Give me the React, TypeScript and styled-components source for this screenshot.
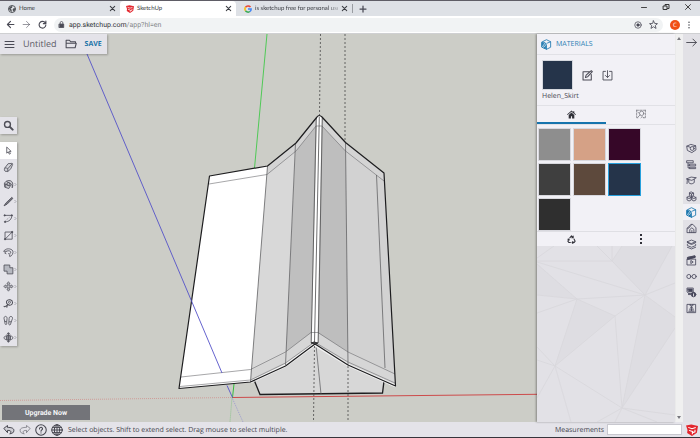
import React from 'react';
import styled, { createGlobalStyle } from 'styled-components';

const Global = createGlobalStyle`
  * { box-sizing: border-box; }
  html, body { margin: 0; }
  body {
    font-family: "Open Sans", "Noto Sans", sans-serif;
    font-size: 7px;
    line-height: 12px;
    text-rendering: geometricPrecision;
    color: #4a4a55;
    background: #e2e1e6;
  }
  button, input { font: inherit; color: inherit; text-rendering: inherit; }
`;

const Page = styled.div`
  min-height: 100vh;
  display: flex;
  flex-direction: column;
  border-top: 1px solid #5f5d66;
  border-bottom: 1px solid #36343b;
`;

const Plain = styled.button`
  display: flex;
  align-items: center;
  justify-content: center;
  flex: none;
  padding: 0;
  border: 0;
  background: transparent;
`;

/* ---------- browser frame ---------- */

const TabStrip = styled.div`
  display: flex;
  align-items: stretch;
  height: 15px;
  background: #dee1e6;
  font-family: Lato, "Open Sans", sans-serif;
  font-size: 6px;
`;

const Tab = styled.div<{ $active?: boolean; $width: number }>`
  display: flex;
  align-items: center;
  gap: 3px;
  width: ${(p) => p.$width}px;
  padding: 0 4px 0 ${(p) => (p.$active ? 6 : 8)}px;
  border-radius: 4px 4px 0 0;
  background: ${(p) => (p.$active ? '#ffffff' : 'transparent')};
  color: #3a3c42;
`;

const TabTitle = styled.span<{ $fade?: boolean }>`
  flex: 1;
  min-width: 0;
  white-space: nowrap;
  ${(p) => p.$fade && 'mask-image: linear-gradient(to right, #000 88%, rgba(0, 0, 0, 0.3));'}
`;

const TabDivider = styled.span`
  align-self: center;
  width: 1px;
  height: 9px;
  margin: 0 6px 0 0;
  background: #9a9da2;
`;

const WindowButtons = styled.div`
  display: flex;
  gap: 14px;
  margin: 0 8px 4px auto;
  align-items: center;
  color: #333333;
`;

const AddressRow = styled.div`
  display: flex;
  align-items: center;
  gap: 7px;
  height: 18px;
  padding: 0 9px 0 6px;
  background: #ffffff;
  border-bottom: 1px solid #cfd0d2;
`;

const AddressBox = styled.div`
  flex: 1;
  display: flex;
  align-items: center;
  gap: 4px;
  height: 14px;
  padding: 0 5px 0 4px;
  border-radius: 7px;
  background: #f1f3f4;
`;

const Url = styled.span`
  flex: 1;
  font-family: Roboto, "Open Sans", sans-serif;
  font-size: 7px;
  padding-top: 1px;
  color: #303236;
  i { font-style: normal; color: #85878b; }
`;

const AddressActions = styled.div`
  display: flex;
  align-items: center;
  gap: 7px;
`;

const Avatar = styled.span`
  display: flex;
  align-items: center;
  justify-content: center;
  width: 10px;
  height: 10px;
  border-radius: 50%;
  background: #f04e14;
  color: #fff;
  font-size: 6px;
  line-height: 10px;
`;

/* ---------- application ---------- */

const Workspace = styled.main`
  flex: 1;
  display: flex;
  align-items: stretch;
`;

const Viewport = styled.section`
  position: relative;
  flex: 1;
  display: flex;
  flex-direction: column;
  align-items: flex-start;
  min-width: 0;
  background: #cccdc7;
  overflow: hidden;
`;

const Model = styled.svg`
  position: absolute;
  inset: 0;
  width: 100%;
  height: 100%;
`;

const Floating = styled.div`
  position: relative;
  background: #e4e3e9;
  box-shadow: 1px 1px 2px rgba(0, 0, 0, 0.25);
`;

const FileBar = styled(Floating)`
  display: flex;
  align-items: center;
  height: 20px;
  padding: 0 5px 0 4px;
  gap: 8px;
  margin-bottom: 63px;
`;

const FileName = styled.span`
  font-size: 9px;
  line-height: 14px;
  color: #5c5c66;
`;

const SaveButton = styled(Plain)`
  padding-top: 2px;
  font-weight: 700;
  font-size: 7px;
  color: #1b74a8;
`;

const SearchBox = styled(Floating)`
  margin-bottom: 8px;
`;

const ToolList = styled(Floating)`
  display: flex;
  flex-direction: column;
`;

const Tool = styled(Plain)<{ $active?: boolean }>`
  width: 17px;
  height: 17px;
  color: #4e4e57;
  background: ${(p) => (p.$active ? '#ffffff' : 'transparent')};
`;

const Upgrade = styled(Plain)`
  position: relative;
  width: 88px;
  height: 15px;
  padding-top: 1px;
  margin: auto 0 2px 2px;
  background: #737479;
  color: #f4f4f6;
  font-family: Roboto, "Liberation Sans", sans-serif;
  font-weight: 700;
  font-size: 7px;
`;

const Panel = styled.aside`
  position: relative;
  flex: none;
  display: flex;
  flex-direction: column;
  width: 138px;
  background: #f2f1f6;
  box-shadow: -1px 0 2px rgba(0, 0, 0, 0.35);
`;

const PanelHeader = styled.header`
  display: flex;
  align-items: center;
  gap: 4px;
  height: 21px;
  padding: 0 4px;
  border-bottom: 1px solid #e1e1e6;
  color: #2a7fb4;
`;

const PanelTitle = styled.h2`
  margin: 0;
  padding-top: 2px;
  font-size: 7px;
  line-height: 12px;
  font-weight: 400;
`;

const Current = styled.div`
  display: grid;
  grid-template-columns: 31px 11px 11px;
  column-gap: 9px;
  row-gap: 1px;
  align-items: center;
  padding: 5px 5px 2px;
  border-bottom: 1px solid #e1e1e6;
`;

const CurrentColor = styled.span`
  height: 30px;
  border: 1px solid #d5d8de;
  background: #25344a;
`;

const CurrentName = styled.span`
  grid-column: 1 / -1;
  font-size: 7px;
  line-height: 12px;
`;

const PanelTabs = styled.div`
  display: grid;
  grid-template-columns: 1fr 1fr;
  height: 19px;
  border-bottom: 1px solid #e1e1e6;
`;

const PanelTab = styled(Plain)<{ $active?: boolean }>`
  color: ${(p) => (p.$active ? '#303038' : '#77777f')};
  border-bottom: 2px solid ${(p) => (p.$active ? '#1674ad' : 'transparent')};
`;

const Swatches = styled.div`
  display: grid;
  grid-template-columns: repeat(3, 33px);
  grid-auto-rows: 33px;
  gap: 2px;
  padding: 3px 1px 0;
  border-bottom: 1px solid #dfdfe4;
`;

const Swatch = styled.button<{ $color: string; $active?: boolean }>`
  padding: 0;
  border: 1px solid ${(p) => (p.$active ? '#27a0dd' : '#d8d8de')};
  background: ${(p) => p.$color};
`;

const PanelActions = styled.div`
  display: grid;
  grid-template-columns: 1fr 1fr;
  height: 14px;
  color: #303038;
`;

const Backdrop = styled.div`
  position: relative;
  flex: 1;
  background: #e2e1e6;
  overflow: hidden;
`;

const Facets = styled.svg`
  position: absolute;
  inset: 0;
  width: 100%;
  height: 100%;
`;

const Scroll = styled.div`
  display: flex;
  flex-direction: column;
  justify-content: space-between;
  align-items: center;
  flex: none;
  width: 8px;
  padding: 3px 0;
  background: #f0f0f0;
  color: #77777d;
`;

const Rail = styled.nav`
  display: flex;
  flex-direction: column;
  flex: none;
  width: 17px;
  background: #e2e1e6;
`;

const RailToggle = styled(Plain)`
  height: 17px;
  margin-bottom: 89px;
  color: #4e4e57;
`;

const RailItem = styled(Plain)<{ $active?: boolean }>`
  height: 16px;
  color: ${(p) => (p.$active ? '#1674ad' : '#45455a')};
  background: ${(p) => (p.$active ? '#f2f1f6' : 'transparent')};
`;

const Status = styled.footer`
  display: flex;
  align-items: center;
  gap: 4px;
  height: 15px;
  padding: 0 2px 0 3px;
  background: #e4e3e9;
  color: #45454e;
`;

const Hint = styled.span`
  padding-top: 2px;
  margin: 0 auto 0 1px;
`;

const Measure = styled.label`
  display: flex;
  align-items: center;
  gap: 3px;
`;

const MeasureText = styled.span`
  padding-top: 2px;
`;

const MeasureInput = styled.input`
  width: 75px;
  height: 11px;
  padding: 0 2px;
  border: 1px solid #c8c8cf;
  background: #fff;
`;

/* ---------- icons ---------- */

const Svg = ({ size = 12, w = 1.3, children }: { size?: number; w?: number; children: React.ReactNode }) => (
  <svg width={size} height={size} viewBox="0 0 16 16" fill="none" stroke="currentColor" strokeWidth={w}
    strokeLinecap="round" strokeLinejoin="round" aria-hidden="true">{children}</svg>
);

const Close = () => <Svg size={7} w={2.4}><path d="M3 3l10 10M13 3L3 13" /></Svg>;

const Logo = ({ size = 9 }: { size?: number }) => (
  <svg width={size} height={size} viewBox="0 0 16 16" aria-hidden="true">
    <path d="M0 2l7-1.500 9 2-1.500 9L8 16l-6.500-4 .5-4z" fill="#e3262d" />
    <path d="M3 4.500l5 1.800 5-1.500M4 8.500l4.500 1.500v3.500M12 7.500v3l-3.500 1" fill="none" stroke="#fff" strokeWidth="1.400" />
  </svg>
);

const Google = () => (
  <svg width="8" height="8" viewBox="0 0 16 16" fill="none" strokeWidth="3" aria-hidden="true">
    <path d="M13 4A6.300 6.300 0 0 0 3 4.500" stroke="#ea4335" />
    <path d="M3 4.500A6.300 6.300 0 0 0 3 11.500" stroke="#fbbc05" />
    <path d="M3 11.500A6.300 6.300 0 0 0 12 13" stroke="#34a853" />
    <path d="M12 13A6 6 0 0 0 14.300 8H8" stroke="#4285f4" />
  </svg>
);

const Materials = () => (
  <>
    <path d="M2 4l6-3 6 3v8l-6 3-6-3zM8 6.500l6-2.500M8 6.500L3.500 4.500M8 7v8" />
    <path d="M1.500 5l5 2v7l-5-2z" fill="currentColor" />
    <path d="M2.500 10.500l4-5.500 2 1.500-4 5z" fill="currentColor" stroke="#fff" strokeWidth=".9" />
  </>
);

const tools: { name: string; menu?: boolean; art: React.ReactNode }[] = [
  { name: 'Select', art: <path d="M5.500 3v9l2.200-2 1.600 3.500 1.600-.8-1.600-3.300h2.700z" fill="#fff" /> },
  { name: 'Eraser', art: <path d="M2.500 9L7.500 2.500 13 2c1 0 1.500 1 1 2l-2.500 6-4.500 4-4-.5C1.800 13 1.800 10 2.500 9zM2.500 9c2-.5 4 0 4.500 1v4M7 10l6.500-7.500" fill="#d2d2d8" /> },
  { name: 'Paint', menu: true, art: <><path d="M2 7c1-5 9-6 11-3 2 2 1.500 7 .5 9V9c-1-1-2-1-2 0l-3 5-6-2zM2 7l8 3M5 3.500l7 4M4 7v5" fill="#cdcdd3" /><circle cx="8" cy="7.500" r="2.300" /></> },
  { name: 'Pencil', menu: true, art: <path d="M1.500 14.500l2.500-4L13 2l1.500 1.500L6 12z" fill="#77777f" /> },
  { name: 'Arc', menu: true, art: <><path d="M2.500 3.500H13M13 3.500C13 9 9 13 3 13" /><path d="M4 11l7-6" strokeDasharray="1 2" /><g fill="currentColor"><circle cx="2.500" cy="3.500" r="1" /><circle cx="13" cy="3.500" r="1" /><circle cx="3" cy="13" r="1" /></g></> },
  { name: 'Rectangle', menu: true, art: <><path d="M3 3h10.500v10.500H3zM3 13.500L13.500 3" /><g fill="currentColor"><circle cx="3" cy="13.500" r="1" /><circle cx="13.500" cy="3" r="1" /></g></> },
  { name: 'Offset', menu: true, art: <path d="M1 6.500C3 1.500 12.500 1.500 14.500 6c1 3-1.500 7.500-4.500 8M2.500 9c2-4 8-4.500 9-1.500 0 2.500-2.500 3.500-4 2M1 6.500l4-.5M9.500 14l.500-3M5 10l-2.500-1" /> },
  { name: 'Push/Pull', menu: true, art: <path d="M1.500 1.500H10v4h4.500v9H6v-4H1.500z" fill="#b6b8c0" /> },
  { name: 'Move', menu: true, art: <path d="M8 1l2.300 3H9v3h3V5.700L15 8l-3 2.300V9H9v3h1.300L8 15l-2.300-3H7V9H4v1.300L1 8l3-2.300V7h3V4H5.700z" fill="#c4c4cb" strokeWidth="1" /> },
  { name: 'Tape measure', menu: true, art: <><path d="M5.500 4.500C7.500 1 14 2.500 14 6.500c0 3.500-3.500 5-6 3.500-2.500-1-3.500-3.500-2.500-5.500zM7 10l-4.500 3-1.500-1M6.500 10l-1 4" strokeWidth="1.500" /><circle cx="9.500" cy="6.300" r="1.500" /></> },
  { name: 'Walk', menu: true, art: <path d="M1.500 5c0-4 4.500-4 4.500 0l-.5 4.500V13c-.5 2-3 1-2.500-1zM9 5c0-4 5.500-3.500 5 0L12 10.500l-1 3.500c-1.500 1.500-3 0-2.500-2zM2.500 9.500h3M9 10h3.300" /> },
  { name: 'Orbit', menu: true, art: <><ellipse cx="8" cy="8.500" rx="6.500" ry="3" /><path d="M8 1v14M5.500 3.500L8 1l2.500 2.500M5.500 12.500L8 15l2.500-2.500M5 6v5l3 1 3-1V6L8 5z" fill="#8f8f98" /></> },
];

const railItems: { name: string; art: React.ReactNode }[] = [
  { name: 'Entity info', art: <><path d="M1.500 4.500L7 2l7 2 .5 6-6 4-6-3zM1.500 4.500L8 7l6-3" /><circle cx="9" cy="8" r="2.800" fill="#e2e1e6" /></> },
  { name: 'Outliner', art: <path d="M1.500 2.500h9v3h-9zM5.500 7.500H14v2.500H5.500zM5.500 12H14v2H5.500zM3 6v7h2.500M3 9h2.500" /> },
  { name: 'Instructor', art: <path d="M1 5.500L7.500 3l7.500 1L9 7.500zM4 7v4c2 2.500 5 2.500 8 0V6.500M2 6.500l-.500 6" /> },
  { name: 'Components', art: <path d="M8 1.500l3 1.500v3.500L8 8 5 6.500V3zM4.500 8l3 1.500V13l-3 1.500-3-1.500V9.500zM11.500 8l3 1.500V13l-3 1.500-3-1.500V9.500zM5 3l3 1.500L11 3M8 4.500V8M1.500 9.500l3 1.500 3-1.500h1l3 1.500 3-1.500" /> },
  { name: 'Materials', art: <Materials /> },
  { name: 'Styles', art: <path d="M2 7.500l5-5.500 3 0 4.500 5v7H2zM2 7.500h2l4-5M5.500 14V9.500l3-2.500 3 2.500V14M8.500 14v-3" /> },
  { name: 'Tags', art: <path d="M2 4l6-2.500L14 4 8 6.500zM2 4v1.500L8 8l6-2.500V4M2 8v1.500L8 12l6-2.500V8M2 12l6 2.500 6-2.500" /> },
  { name: 'Scenes', art: <><path d="M2 6h12v8.500H2zM2 6V3.500L13 1l.6 2.300L3 6M7 8.500v4l3-2z" /><path d="M3 3.500l10-2v2L3 6z" fill="currentColor" /></> },
  { name: 'Display', art: <><circle cx="4.200" cy="8" r="3" /><circle cx="11.800" cy="8" r="3" /></> },
  { name: 'Model info', art: <><path d="M2 1.500h8.500v8H4L2 7.500zM4 11h3M4 9v2" /><path d="M3 3h6v4H4z" fill="currentColor" /><circle cx="11" cy="11" r="3.300" fill="currentColor" /><path d="M11 10v3" stroke="#fff" /></> },
  { name: 'Soften', art: <path d="M2 2h12v12H2zM4 12h8M8 11V6M6 8l2-3 2 3M5 10h6M6 2v2h4V2" /> },
];

const Model3D = () => (
  <Model viewBox="0 34 537 388" preserveAspectRatio="xMidYMid slice" role="img" aria-label="Roof model">
    <g fill="none">
      <path d="M0 400.500L232 397.500" stroke="#cf8f8b" strokeWidth=".8" strokeDasharray="1 1" />
      <path d="M232 397.500L230 422" stroke="#7cc07c" strokeWidth=".8" strokeDasharray="1 1" />
      <path d="M232 397.500L243 422" stroke="#9191cf" strokeWidth=".8" strokeDasharray="1 1" />
      <path d="M267 34L254.500 168" stroke="#50c957" />
      <path d="M232 397.500L537 394.300" stroke="#cc4b4b" />
      <path d="M232.500 397.500L234 384" stroke="#36bd3d" />
    </g>
    <path d="M254.500 381L260 394.500 382.500 393 384 381 315 343z" fill="#d7d7d7" stroke="#1d1d1f" strokeWidth="1.300" />
    <path d="M316 345L321 394" stroke="#59595b" strokeWidth=".7" />
    <path d="M209.500 176L267.500 166 250.500 382 179 388.500z" fill="#fff" />
    <path d="M267.500 166L296 143 286 365 250.500 382z" fill="#d8d8d8" />
    <path d="M296 143L317 117 312 344 285.500 365z" fill="#bfbfbf" />
    <path d="M321 117L345.500 142.500 348 364.500 317 344z" fill="#bebebe" />
    <path d="M345.500 142.500L384 173 395.500 386 348 364.500z" fill="#d2d2d2" />
    <path d="M267.500 166L296 143 319 115.500 345.500 142.500 384 173V181L345.500 151 322 126H316L296 151 267 175z" fill="#d4d4d4" />
    <path d="M250.500 370L285.500 352 311 333H318L348 352 395 374V385L348 364 315 343 285.500 365 250.500 381z" fill="#d6d6d6" />
    <path d="M250.500 382L285.500 365.500 314.500 344.500 348 365 395.500 386" fill="none" stroke="#f4f4f4" strokeWidth="3" />
    <path d="M317 117h4.700L317.500 343h-6z" fill="#fff" />
    <g fill="none" stroke="#6c6c6e" strokeWidth=".6">
      <path d="M209 184L267 174.500 296 151 316 126H322L345.500 151 384 181" />
      <path d="M181 377L250.500 369.500 285.500 352 311 332.500H318L348 352 395 374" />
      <path d="M267.500 166L250.500 382M295.500 143L285.500 365M345.500 142.500L348 365M376.500 175L385 368" stroke="#555557" strokeWidth=".7" />
      <path d="M316.200 118L311.200 343M319.300 117L314.500 342M322.300 118L318.200 343" stroke="#4b4b4d" strokeWidth=".8" />
      <path d="M180 386.500L250.500 380 285.500 363 314.500 342 348 362 395 383" />
    </g>
    <path d="M209.500 176L267.500 166 296 143 317 117Q319 114 322 117L345.500 142.500 384 173 395.500 386 348 365 315 344 285.500 366 250.500 382 179 388.500z" fill="none" stroke="#1d1d1f" strokeWidth="1.200" strokeLinejoin="round" />
    <path d="M311 343l3-1 4 1-3 1z" fill="#555" stroke="#1d1d1f" strokeWidth=".8" />
    <path d="M87 54L222 373M227 385.500L232.500 397.500" stroke="#5552c8" strokeWidth=".9" />
    <path d="M320.500 34L319.500 115M345 34V142M314.500 346L313.500 422M348 366V422" stroke="#484848" strokeWidth=".8" strokeDasharray="2 2" />
  </Model>
);

const colors = ['#8e8e8e', '#d5a186', '#360728', '#3f3f3f', '#5d493c', '#25344a', '#2f2f2f'];

export default function App() {
  return (
    <Page>
      <Global />
      <TabStrip>
        <Tab $width={120}>
          <svg width="8" height="8" viewBox="0 0 16 16" aria-hidden="true"><circle cx="8" cy="8" r="7" fill="#e8eaed" stroke="#505358" strokeWidth="2" /><path d="M2 6l4-4 3 1-1 3-3 1 2 2 1 5-3-2-3-4zM10 7l5-1-1 5-3 2-2-3z" fill="#505358" /></svg>
          <TabTitle>Home</TabTitle>
          <Plain aria-label="Close Home"><Close /></Plain>
        </Tab>
        <Tab $active $width={116}>
          <Logo size={8} />
          <TabTitle>SketchUp</TabTitle>
          <Plain aria-label="Close SketchUp"><Close /></Plain>
        </Tab>
        <Tab $width={116}>
          <Google />
          <TabTitle $fade>is sketchup free for personal use</TabTitle>
          <Plain aria-label="Close search"><Close /></Plain>
        </Tab>
        <TabDivider />
        <Plain aria-label="New tab"><Svg size={8} w={2.5}><path d="M8 2v12M2 8h12" /></Svg></Plain>
        <WindowButtons>
          <Plain aria-label="Minimize"><Svg size={8} w={1.8}><path d="M3 9h10" /></Svg></Plain>
          <Plain aria-label="Restore"><Svg size={8} w={2}><path d="M3 6h7v7H3zM6 5V3h8v8h-3" /></Svg></Plain>
          <Plain aria-label="Close window"><Svg size={8} w={1.8}><path d="M3 3l10 10M13 3L3 13" /></Svg></Plain>
        </WindowButtons>
      </TabStrip>
      <AddressRow>
        <Plain aria-label="Back"><Svg size={9} w={2}><path d="M14 8H2.500M8 2.500L2.500 8 8 13.500" /></Svg></Plain>
        <Plain aria-label="Forward"><Svg size={9} w={1}><path d="M2 8h11.500M8 2.500L13.500 8 8 13.500" /></Svg></Plain>
        <Plain aria-label="Reload"><Svg size={9} w={2}><path d="M13 5A6 6 0 1 0 14 9M14 2v4.500H9.500" /></Svg></Plain>
        <AddressBox>
          <Svg size={7} w={1.800}><path d="M3 7h10v8H3z" fill="currentColor" /><path d="M5 7V4c0-4 6-4 6 0v3" /></Svg>
          <Url>app.sketchup.com<i>/app?hl=en</i></Url>
          <AddressActions>
            <Plain aria-label="Location"><Svg size={8} w={1.500}><circle cx="8" cy="8" r="6.500" /><circle cx="8" cy="8" r="2.500" fill="currentColor" /></Svg></Plain>
            <Plain aria-label="Bookmark"><Svg size={9} w={1.500}><path d="M8 1.500l2 4.500 5 .5-3.800 3.200L12.500 15 8 12l-4.500 3 1.300-5.300L1 6.500 6 6z" /></Svg></Plain>
          </AddressActions>
        </AddressBox>
        <Avatar>C</Avatar>
        <Plain aria-label="Browser menu"><svg width="4" height="8" viewBox="0 0 4 8" fill="#55575d" aria-hidden="true"><circle cx="2" cy="1.300" r=".8" /><circle cx="2" cy="4" r=".8" /><circle cx="2" cy="6.700" r=".8" /></svg></Plain>
      </AddressRow>

      <Workspace>
        <Viewport>
          <Model3D />
          <FileBar>
            <Plain aria-label="Menu"><Svg size={11} w={1.500}><path d="M1.500 3.500h13M1.500 8h13M1.500 12.500h13" /></Svg></Plain>
            <FileName>Untitled</FileName>
            <Plain aria-label="Open"><Svg size={12} w={1.400}><path d="M1.500 13V3H6l1.500 2H14v2M1.500 13V7h13.500L13.500 13z" /></Svg></Plain>
            <SaveButton>SAVE</SaveButton>
          </FileBar>
          <SearchBox>
            <Tool aria-label="Search"><Svg size={11} w={2}><circle cx="6.500" cy="6.500" r="4.300" /><path d="M10 10l4 4" strokeWidth="3" /></Svg></Tool>
          </SearchBox>
          <ToolList>
            {tools.map((t, i) => (
              <Tool key={t.name} aria-label={t.name} $active={i === 0}>
                <svg width="17" height="17" viewBox="0 0 17 17" aria-hidden="true">
                  <g transform="translate(3 3) scale(.68)" fill="none" stroke="currentColor" strokeWidth="1.200" strokeLinejoin="round">{t.art}</g>
                  {t.menu && <path d="M14.500 7l1.500 1.500-1.500 1.500" fill="none" stroke="#9a9aa2" strokeWidth=".8" />}
                </svg>
              </Tool>
            ))}
          </ToolList>
          <Upgrade>Upgrade Now</Upgrade>
        </Viewport>

        <Panel>
          <PanelHeader>
            <Svg size={11}><Materials /></Svg>
            <PanelTitle>MATERIALS</PanelTitle>
          </PanelHeader>
          <Current>
            <CurrentColor />
            <Plain aria-label="Edit material"><Svg size={11} w={1.500}><path d="M11 2.500H1.500v12h12V6.500M5 11l1-3.500L13.500 1 15 2.500 8 10z" /></Svg></Plain>
            <Plain aria-label="Save material"><Svg size={11} w={1.300}><path d="M5 2H1.500v12.500h13V2H11M8 1v9.500M5 8l3 3 3-3" /></Svg></Plain>
            <CurrentName>Helen_Skirt</CurrentName>
          </Current>
          <PanelTabs>
            <PanelTab $active aria-label="In model"><svg width="9" height="9" viewBox="0 0 16 16" fill="currentColor" aria-hidden="true"><path d="M8 1L0 8l1 1 7-6 7 6 1-1-3-2.600V2h-2v1.600zM8 4.500L3 9v6h4v-4h2v4h4V9z" /></svg></PanelTab>
            <PanelTab aria-label="Browse"><Svg size={10} w={1.200}><path d="M1 2h3M6 2h4M12 2h3M1 2v3M1 7v3M1 12v2h2M12 14h3v-3M15 2v3M15 7v2M3 13l3.500-3.500M8 14l2-2 2 2M3 5l2 2" /><circle cx="9" cy="7" r="3.500" /></Svg></PanelTab>
          </PanelTabs>
          <Swatches>
            {colors.map((c, i) => <Swatch key={c} $color={c} $active={i === 5} aria-label={`Material ${i + 1}`} />)}
          </Swatches>
          <PanelActions>
            <Plain aria-label="Purge unused"><Svg size={9} w={1.800}><path d="M5 5l3-3.500L11 5M12.500 7l2 4-2 2.500H9M6 13.500H3.500L1.500 11l2-4M11 2v3H8.500M10.500 11.500L9 13.500 10.500 15M1.500 7.500l2-.5.500 2" /></Svg></Plain>
            <Plain aria-label="More"><svg width="4" height="10" viewBox="0 0 4 10" fill="currentColor" aria-hidden="true"><path d="M1 0h2v2H1zM1 4h2v2H1zM1 8h2v2H1z" /></svg></Plain>
          </PanelActions>
          <Backdrop>
            <Facets viewBox="0 0 138 176" preserveAspectRatio="none" aria-hidden="true">
              <path d="M75 15L85 0h50L108 49zM40 53L78 70 18 120zM0 18L40 53 0 49zM108 49L138 71V82L85 162z" fill="#dedde2" />
              <path d="M0 12L17 0M0 15h75L60 0M75 0v15L85 0M75 15l33 34L135 0M0 16l108 33 30-12M0 18l40 35 68-4-30 21L18 120 0 101M0 49l40 4L0 67M40 53l38 17 7 92M40 53L18 120l67 42 23-113 30 22M138 82L85 162l53 7M85 162l-25 14M85 162l-7 14M85 162l35 14M0 114l18 6L0 152M18 120l16 56" fill="none" stroke="#d9d8dd" strokeWidth=".9" />
            </Facets>
          </Backdrop>
        </Panel>
        <Scroll>
          <svg width="4" height="3" viewBox="0 0 4 3" fill="currentColor" aria-hidden="true"><path d="M0 3l2-3 2 3z" /></svg>
          <svg width="4" height="3" viewBox="0 0 4 3" fill="currentColor" aria-hidden="true"><path d="M0 0l2 3 2-3z" /></svg>
        </Scroll>
        <Rail>
          <RailToggle aria-label="Collapse panel"><Svg size={11} w={1.400}><path d="M1 8h14M10 3l5 5-5 5" /></Svg></RailToggle>
          {railItems.map((r) => (
            <RailItem key={r.name} aria-label={r.name} $active={r.name === 'Materials'}><Svg size={11} w={1.200}>{r.art}</Svg></RailItem>
          ))}
        </Rail>
      </Workspace>

      <Status>
        <Plain aria-label="Undo"><Svg><path d="M1.500 5.500L6 2v2.500c5 0 8.500 1 8.500 4S12 13 9 13c2-1.500 3-4.500-3-4.500V11z" fill="#cfcfd5" /></Svg></Plain>
        <Plain aria-label="Redo"><Svg w={0.7}><path d="M14.500 5.500L10 2v2.500c-5 0-8.500 1-8.500 4S4 13 7 13c-2-1.500-3-4.500 3-4.500V11z" /></Svg></Plain>
        <Plain aria-label="Help"><Svg w={1.400}><circle cx="8" cy="8" r="7" /><path d="M6 6.500c0-3 4.500-2.500 4 0C9.800 7.800 8 7.800 8 9.500M8 11.800v.2" /></Svg></Plain>
        <Plain aria-label="Language"><Svg><circle cx="8" cy="8" r="7" /><ellipse cx="8" cy="8" rx="3.500" ry="7" /><path d="M8 1v14M1 8h14M2 4.500h12M2 11.500h12" /></Svg></Plain>
        <Hint>Select objects. Shift to extend select. Drag mouse to select multiple.</Hint>
        <Measure><MeasureText>Measurements</MeasureText> <MeasureInput type="text" /></Measure>
        <Logo size={12} />
      </Status>
    </Page>
  );
}
